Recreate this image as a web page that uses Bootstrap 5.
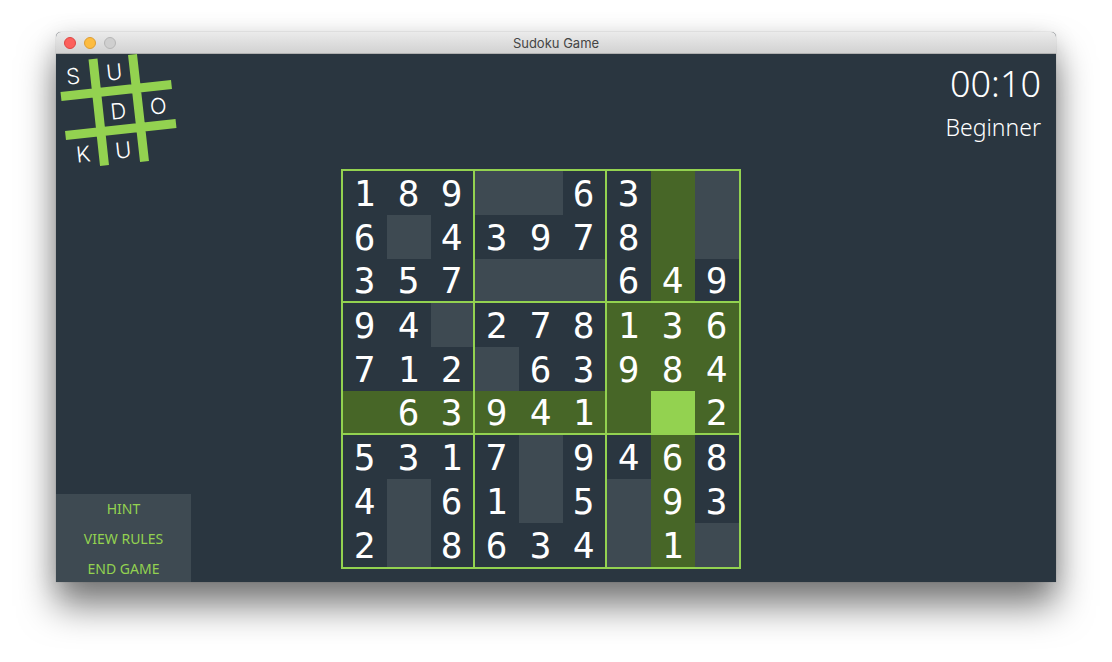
<!DOCTYPE html>
<html lang="en">
<head>
<meta charset="utf-8">
<meta name="viewport" content="width=device-width, initial-scale=1">
<title>Sudoku Game</title>
<link href="https://cdn.jsdelivr.net/npm/bootstrap@5.3.0/dist/css/bootstrap.min.css" rel="stylesheet">
<style>
:root { --ink: #2a3640; --slot: #3e4a52; --peer: #476627; --lime: #93d250; }
body { padding: 32px 56px 80px; background: #fff; }
.app-window {
  background: var(--ink);
  border-radius: 5px 5px 0 0;
  box-shadow: 0 0 1px rgba(0,0,0,.45), 0 24px 36px rgba(0,0,0,.5), 0 4px 24px rgba(0,0,0,.12);
}
.title-bar {
  height: 22px;
  background: linear-gradient(#ebebeb, #d2d2d2);
  border-bottom: 1px solid #b0b0b0;
  border-radius: 5px 5px 0 0;
  font: 13px/21px Inter, sans-serif;
  color: #454545;
}
.lights { width: 60px; gap: 8px; padding-left: 8px; }
.light { width: 12px; height: 12px; padding: 0; border: 1px solid; border-radius: 50%; }
.light-close { background: #fc605c; border-color: #de4643; }
.light-min { background: #fdbc40; border-color: #dd9d33; }
.light-zoom { background: #cfcfcf; border-color: #b6b6b6; }
.title-text { padding-top: 2px; }
.game-head { height: 115px; }
.status { padding: 8px 15px; color: #fff; font-family: "Noto Sans", sans-serif; font-weight: 300; }
.clock { font-size: 36px; line-height: 44px; }
.level { font-size: 23px; line-height: 42px; }
.side { width: 135px; }
.side-menu { background: var(--slot); gap: 2px; }
.side-menu button {
  height: 28px; padding: 0; border: 0; background: none; color: var(--lime);
  font: 14px/30px "Noto Sans", sans-serif;
}
.side-balance { width: 165px; }
.board { border: 2px solid var(--lime); border-collapse: separate; border-spacing: 0; table-layout: fixed; width: 400px; height: 400px; }
.board td {
  width: 44px; height: 44px; padding: 2px 1px 0 0; text-align: center; vertical-align: middle;
  color: #fff; font: 36px/40px "DejaVu Sans Mono", monospace;
}
.board td:nth-child(3n):not(:last-child) { border-right: 2px solid var(--lime); }
.board tr:nth-child(3n):not(:last-child) td { border-bottom: 2px solid var(--lime); }
.board input { display: block; width: 100%; height: 40px; padding: 0; border: 0; outline: 0; background: none; color: #fff; text-align: center; font: inherit; }
.board .slot { background: var(--slot); }
.board .peer { background: var(--peer); }
.board .chosen { background: var(--lime); }
</style>
</head>
<body class="min-vh-100 d-flex flex-column">
<div class="app-window flex-grow-1 d-flex flex-column">
  <header class="title-bar d-flex align-items-center">
    <div class="lights d-flex">
      <button type="button" class="light light-close" aria-label="Close"></button>
      <button type="button" class="light light-min" aria-label="Minimize"></button>
      <button type="button" class="light light-zoom" aria-label="Zoom" disabled></button>
    </div>
    <div class="title-text flex-grow-1 text-center">Sudoku Game</div>
    <div class="lights"></div>
  </header>
  <div class="game-head d-flex justify-content-between">
    <svg width="125" height="115" viewBox="0 0 125 115" role="img" aria-label="Sudoku logo">
      <g stroke="#93d250" stroke-width="9">
        <path d="M37 5L48.500 111.500M76.500 .5L88.500 107.500M5 42.500L115.500 30.500M9.500 81.500L120 69.500"/>
      </g>
      <g fill="#fff" font-family="Inter, sans-serif" font-weight="300" font-size="22" text-anchor="middle">
        <text transform="translate(18 30) rotate(-6)">S</text>
        <text transform="translate(59 26) rotate(-6)">U</text>
        <text transform="translate(63 65) rotate(-6)">D</text>
        <text transform="translate(103 60) rotate(-6)">O</text>
        <text transform="translate(28 108) rotate(-6)">K</text>
        <text transform="translate(68 104) rotate(-6)">U</text>
      </g>
    </svg>
    <div class="status text-end">
      <div class="clock">00:10</div>
      <div class="level">Beginner</div>
    </div>
  </div>
  <main class="flex-grow-1 d-flex">
    <nav class="side d-flex flex-column justify-content-end" aria-label="Game">
      <div class="side-menu d-flex flex-column">
        <button type="button">HINT</button>
        <button type="button">VIEW RULES</button>
        <button type="button">END GAME</button>
      </div>
    </nav>
    <div class="flex-grow-1 d-flex justify-content-center align-items-start">
      <table class="board"><tbody id="cells"></tbody></table>
    </div>
    <div class="side-balance"></div>
  </main>
</div>
<script src="https://cdn.jsdelivr.net/npm/bootstrap@5.3.0/dist/js/bootstrap.bundle.min.js"></script>
<script>
const rows = [
  "189..63..", "6.43978..", "357...649",
  "94.278136", "712.63984", ".63941..2",
  "5317.9468", "4.61.5.93", "2.8634.1."
];
const chosen = { r: 5, c: 7 };
const box = (r, c) => Math.floor(r / 3) * 3 + Math.floor(c / 3);
const body = document.getElementById("cells");
rows.forEach((line, r) => {
  const tr = body.insertRow();
  [...line].forEach((ch, c) => {
    const td = tr.insertCell();
    if (r === chosen.r && c === chosen.c) td.className = "chosen";
    else if (r === chosen.r || c === chosen.c || box(r, c) === box(chosen.r, chosen.c)) td.className = "peer";
    else if (ch === ".") td.className = "slot";
    if (ch === ".") {
      const input = document.createElement("input");
      input.type = "text";
      input.maxLength = 1;
      input.setAttribute("aria-label", `Row ${r + 1}, column ${c + 1}`);
      td.append(input);
    } else td.textContent = ch;
  });
});
</script>
</body>
</html>
